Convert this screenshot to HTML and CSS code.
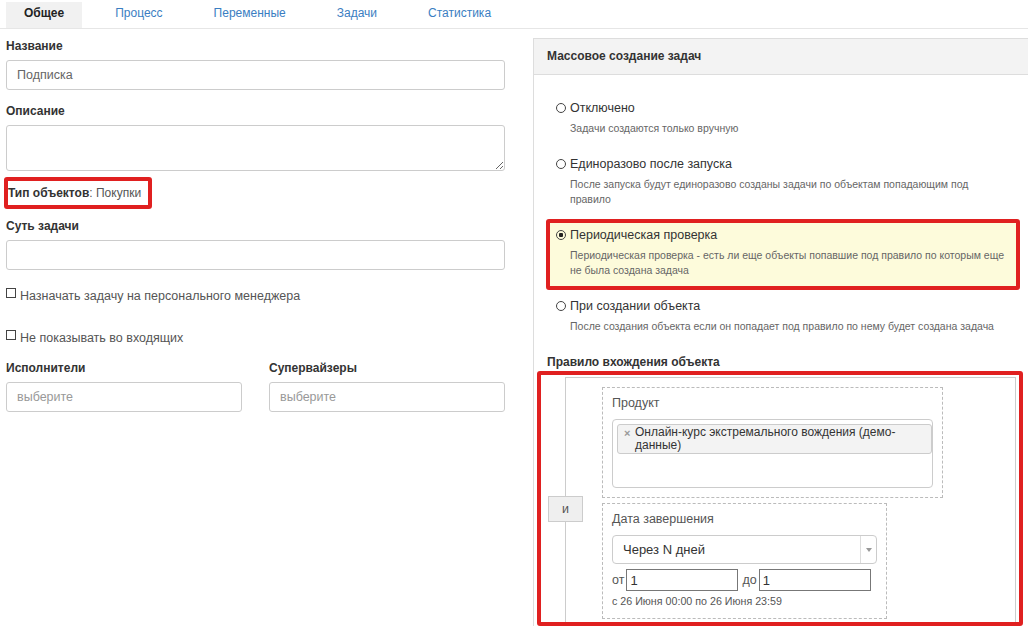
FILE: index.html
```html
<!DOCTYPE html>
<html lang="ru">

<head>
    <meta charset="UTF-8">
    <meta name="viewport" content="width=device-width, initial-scale=1.0">
    <title>Задача — Общее</title>
    <link rel="stylesheet" href="styles.css">
</head>

<body>
    <div class="tabs">
        <a href="javascript:;" class="tab active">Общее</a>
        <a href="javascript:;" class="tab">Процесс</a>
        <a href="javascript:;" class="tab">Переменные</a>
        <a href="javascript:;" class="tab">Задачи</a>
        <a href="javascript:;" class="tab">Статистика</a>
    </div>

    <div class="main">
        <!-- левая колонка: основные поля -->
        <div class="left">
            <div class="field">
                <label class="label">Название</label>
                <input class="input" type="text" value="Подписка">
            </div>
            <div class="field field-desc">
                <label class="label">Описание</label>
                <textarea class="input textarea"></textarea>
            </div>
            <div class="obj-type"><b>Тип объектов</b><span>: Покупки</span></div>
            <div class="field field-task">
                <label class="label">Суть задачи</label>
                <input class="input" type="text">
            </div>
            <div class="check-row check-first"><span class="check"></span>Назначать задачу на персонального менеджера</div>
            <div class="check-row check-second"><span class="check"></span>Не показывать во входящих</div>
            <div class="pair">
                <div class="field">
                    <label class="label">Исполнители</label>
                    <input class="input" type="text" placeholder="выберите">
                </div>
                <div class="field">
                    <label class="label">Супервайзеры</label>
                    <input class="input" type="text" placeholder="выберите">
                </div>
            </div>
        </div>

        <!-- правая колонка: массовое создание -->
        <div class="panel">
            <div class="panel-title">Массовое создание задач</div>
            <div class="panel-body">
                <div class="option">
                    <div class="option-name"><span class="radio"></span>Отключено</div>
                    <div class="option-desc">Задачи создаются только вручную</div>
                </div>
                <div class="option">
                    <div class="option-name"><span class="radio"></span>Единоразово после запуска</div>
                    <div class="option-desc">После запуска будут единоразово созданы задачи по объектам попадающим под<br>правило</div>
                </div>
                <div class="option option-selected">
                    <div class="option-name"><span class="radio checked"></span>Периодическая проверка</div>
                    <div class="option-desc">Периодическая проверка - есть ли еще объекты попавшие под правило по которым еще<br>не была создана задача</div>
                </div>
                <div class="option">
                    <div class="option-name"><span class="radio"></span>При создании объекта</div>
                    <div class="option-desc">После создания объекта если он попадает под правило по нему будет создана задача</div>
                </div>

                <div class="rule-title">Правило вхождения объекта</div>
                <div class="rule-mark">
                    <div class="rule-group">
                        <span class="rule-and">и</span>
                        <div class="cond cond-product">
                            <div class="cond-label">Продукт</div>
                            <div class="multi">
                                <div class="tag">
                                    <span class="tag-x">×</span>
                                    <span class="tag-text">Онлайн-курс экстремального вождения (демо-<br>данные)</span>
                                </div>
                            </div>
                        </div>
                        <div class="cond cond-date">
                            <div class="cond-label">Дата завершения</div>
                            <div class="select">
                                <span class="select-value">Через N дней</span>
                                <span class="select-arrow"><i></i></span>
                            </div>
                            <div class="range">
                                <span>от</span><input type="text" value="1">
                                <span class="range-to">до</span><input type="text" value="1">
                            </div>
                            <div class="range-note">с 26 Июня 00:00 по 26 Июня 23:59</div>
                        </div>
                    </div>
                </div>
            </div>
        </div>
    </div>
</body>

</html>
```

FILE: styles.css
```css
* {
    margin: 0;
    padding: 0;
    box-sizing: border-box;
}

html,
body {
    overflow: hidden;
}

body {
    width: 1028px;
    height: 626px;
    font-family: "Liberation Sans", Arial, sans-serif;
    font-size: 12.5px;
    color: #333;
    background-color: #fff;
}

a {
    text-decoration: none;
}

/* вкладки */
.tabs {
    display: flex;
    height: 29px;
    padding-left: 6px;
    border-bottom: 1px solid #e6e6e6;
}

.tab {
    height: 26px;
    margin-top: 2px;
    margin-right: 15px;
    padding: 0 18px;
    font-size: 12px;
    line-height: 22px;
    color: #3a7ec2;
}

.tab.active {
    background-color: #f1f1f1;
    color: #222;
    font-weight: bold;
}

.main {
    display: flex;
}

/* левая колонка */
.left {
    flex-shrink: 0;
    width: 499px;
    margin-left: 6px;
    padding-top: 8px;
}

.label {
    display: block;
    margin-bottom: 5px;
    font-size: 12px;
    line-height: 18px;
    font-weight: bold;
    color: #333;
}

.input {
    display: block;
    width: 100%;
    height: 30px;
    padding: 0 10px;
    border: 1px solid #ccc;
    border-radius: 3px;
    font-family: "Liberation Sans", Arial, sans-serif;
    font-size: 12.5px;
    color: #666;
    background-color: #fff;
    outline: none;
}

.input::placeholder {
    color: #999;
}

.textarea {
    height: 46px;
    padding: 5px 10px;
    resize: vertical;
}

.field-desc {
    margin-top: 12px;
}

.obj-type {
    width: fit-content;
    margin: 6px 0 0 -2px;
    padding: 3px 7px 3px 0;
    font-size: 12px;
    line-height: 18px;
    border: 4px solid #e02020;
    border-radius: 3px;
}

.obj-type span {
    color: #555;
}

.field-task {
    margin-top: 8px;
}

.check-row {
    line-height: 18px;
    color: #555;
}

.check-first {
    margin-top: 17px;
}

.check-second {
    margin-top: 24px;
}

.check {
    display: inline-block;
    width: 10px;
    height: 10px;
    margin-right: 4px;
    border: 1px solid #444;
    vertical-align: 2px;
}

.pair {
    display: grid;
    grid-template-columns: 1fr 1fr;
    column-gap: 27px;
    margin-top: 12px;
}

/* правая колонка */
.panel {
    flex-shrink: 0;
    width: 500px;
    min-height: 620px;
    margin: 9px 0 0 28px;
    border: 1px solid #ddd;
}

.panel-title {
    height: 36px;
    padding: 0 13px;
    font-size: 12px;
    line-height: 35px;
    font-weight: bold;
    background-color: #f3f3f3;
    border-bottom: 1px solid #ddd;
}

.panel-body {
    padding: 17px 12px 0 12px;
}

.option {
    padding: 7px 10px 12px;
}

.option-selected {
    padding: 3px 6px 8px;
    border: 4px solid #e02020;
    border-radius: 3px;
    background-color: #fdfbdb;
}

.option-name {
    line-height: 18px;
    color: #333;
}

.radio {
    display: inline-block;
    width: 10px;
    height: 10px;
    margin-right: 4px;
    border: 1px solid #444;
    border-radius: 50%;
    vertical-align: -1px;
}

.radio.checked {
    background: radial-gradient(circle, #222 2px, transparent 2.5px);
}

.option-desc {
    margin-top: 4px;
    padding-left: 14px;
    font-size: 10.5px;
    line-height: 15px;
    color: #666;
    white-space: nowrap;
}

.rule-title {
    margin-top: 7px;
    padding-left: 1px;
    font-size: 12px;
    line-height: 18px;
    font-weight: bold;
}

/* правило вхождения */
.rule-mark {
    height: 255px;
    margin: 0 -3px 0 -9px;
    padding: 2px 3px 0 24px;
    border: 4px solid #e02020;
    border-radius: 3px;
    overflow: hidden;
}

.rule-group {
    position: relative;
    min-height: 300px;
    padding: 9px 0 0 36px;
    border: 1px solid #ccc;
    border-bottom: 0;
}

.rule-and {
    position: absolute;
    top: 118px;
    left: -18px;
    width: 35px;
    height: 26px;
    line-height: 24px;
    text-align: center;
    color: #555;
    background-color: #efefef;
    border: 1px solid #ccc;
}

.cond {
    margin-bottom: 5px;
    padding: 8px 9px 9px;
    border: 1px dashed #bbb;
}

.cond-product {
    width: 341px;
}

.cond-date {
    width: 285px;
}

.cond-label {
    margin-bottom: 8px;
    line-height: 15px;
    color: #555;
}

.multi {
    height: 69px;
    padding: 4px 0 0 4px;
    border: 1px solid #ccc;
    border-radius: 4px;
}

.tag {
    display: flex;
    height: 30px;
    padding-left: 6px;
    font-size: 12px;
    line-height: 13px;
    color: #333;
    background-color: #f3f3f3;
    border: 1px solid #ccc;
    border-radius: 3px;
}

.tag-x {
    width: 11px;
    padding-top: 2px;
    font-size: 11px;
    font-weight: bold;
    color: #999;
}

.tag-text {
    padding-top: 1px;
}

.select {
    display: flex;
    height: 29px;
    border: 1px solid #ccc;
    border-radius: 4px;
}

.select-value {
    flex: 1;
    padding-left: 10px;
    font-size: 13px;
    line-height: 27px;
    color: #333;
}

.select-arrow {
    display: flex;
    align-items: center;
    justify-content: center;
    width: 16px;
    border-left: 1px solid #ddd;
}

.select-arrow i {
    width: 0;
    height: 0;
    border-top: 4px solid #999;
    border-left: 3px solid transparent;
    border-right: 3px solid transparent;
}

.range {
    display: flex;
    align-items: center;
    height: 22px;
    margin-top: 5px;
    color: #555;
}

.range input {
    width: 112px;
    height: 22px;
    margin-left: 2px;
    padding: 0 3px;
    font-family: "Liberation Sans", Arial, sans-serif;
    font-size: 13px;
    color: #333;
    border: 1px solid #777;
    outline: none;
}

.range-to {
    margin-left: 4px;
}

.range-note {
    margin-top: 3px;
    font-size: 10.7px;
    line-height: 15px;
    color: #555;
}
```
